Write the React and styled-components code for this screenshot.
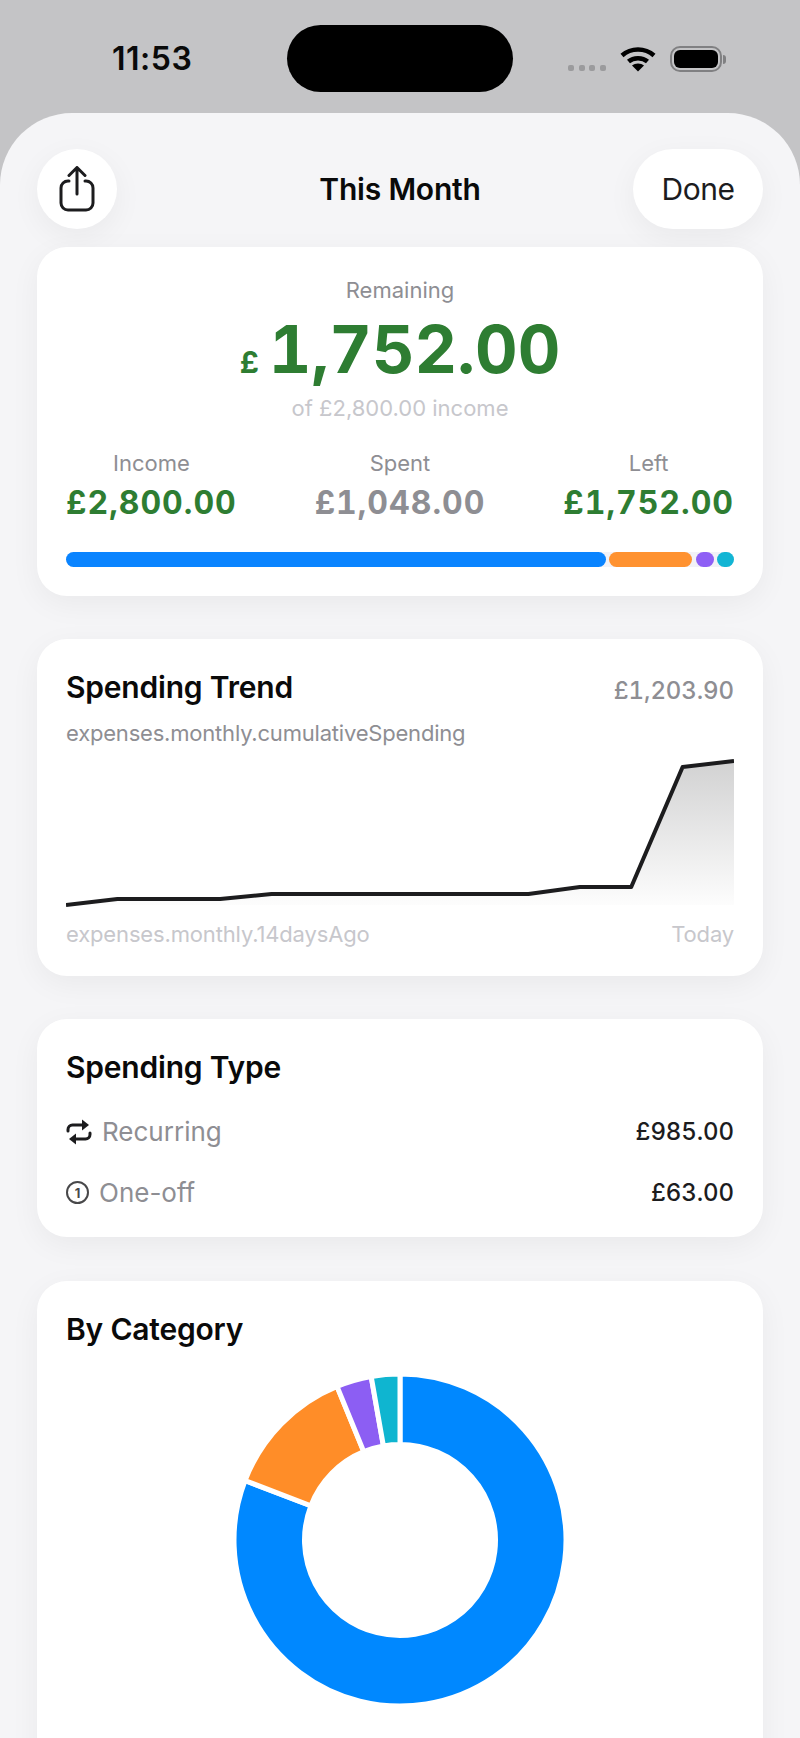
import React from 'react';
import styled, { createGlobalStyle } from 'styled-components';

const Global = createGlobalStyle`
  html, body {
    margin: 0;
    padding: 0;
    background: #c4c4c6;
    font-family: Inter, "Liberation Sans", sans-serif;
    -webkit-font-smoothing: antialiased;
  }
`;

const Page = styled.div`
  width: 800px;
  height: 1738px;
  overflow: hidden;
  background: #c4c4c6;
`;

const StatusBar = styled.div`
  height: 113px;
  display: grid;
  grid-template-columns: 287px 226px 1fr;
  box-sizing: border-box;
  padding-top: 25px;
`;

const Time = styled.div`
  height: 68px;
  padding-left: 112px;
  line-height: 68px;
  font-size: 32px;
  font-weight: 600;
  letter-spacing: 0.5px;
  color: #0a0a0a;
`;

const Island = styled.div`
  height: 67px;
  border-radius: 34px;
  background: #000;
`;

const StatusIcons = styled.div`
  display: flex;
  align-items: flex-start;
  padding: 21px 0 0 55px;
`;

const SignalDots = styled.div`
  display: flex;
  gap: 4.6px;
  margin: 19px 14px 0 0;
`;

const SignalDot = styled.span`
  width: 6px;
  height: 6px;
  border-radius: 2px;
  background: #9b9b9d;
`;

const BatteryBody = styled.div`
  width: 52px;
  height: 26px;
  box-sizing: border-box;
  margin-left: 14px;
  padding: 2px;
  border: 2px solid #808082;
  border-radius: 10px;
`;

const BatteryFill = styled.div`
  height: 100%;
  border-radius: 6px;
  background: #000;
`;

const BatteryNub = styled.span`
  width: 3px;
  height: 9px;
  margin: 8.5px 0 0 1.5px;
  border-radius: 0 3px 3px 0;
  background: #808082;
`;

const Sheet = styled.div`
  display: flex;
  flex-direction: column;
  box-sizing: border-box;
  min-height: 1625px;
  padding: 36px 37px 0;
  border-radius: 72px 72px 0 0;
  background: #f5f5f7;
`;

const Header = styled.header`
  display: grid;
  grid-template-columns: 130px 1fr 130px;
  align-items: center;
  height: 80px;
  margin-bottom: 18px;
`;

const ShareButton = styled.div`
  display: flex;
  align-items: center;
  justify-content: center;
  width: 80px;
  height: 80px;
  border-radius: 50%;
  background: #fff;
  box-shadow: 0 8px 30px rgba(0, 0, 0, 0.05);
`;

const HeaderTitle = styled.h1`
  margin: 0;
  text-align: center;
  font-size: 30px;
  font-weight: 600;
  letter-spacing: -0.2px;
  color: #0a0a0a;
`;

const DoneButton = styled.div`
  display: flex;
  align-items: center;
  justify-content: center;
  height: 80px;
  border-radius: 40px;
  background: #fff;
  font-size: 30px;
  letter-spacing: -0.5px;
  color: #1c1c1e;
  box-shadow: 0 8px 30px rgba(0, 0, 0, 0.05);
`;

const Card = styled.section`
  box-sizing: border-box;
  margin-bottom: ${props => props.$gap || 43}px;
  padding: ${props => props.$top || 30}px 29px ${props => props.$bottom || 28}px;
  border-radius: 30px;
  background: #fff;
  box-shadow: 0 8px 30px rgba(0, 0, 0, 0.05);
`;

const CenterLabel = styled.div`
  text-align: center;
  font-size: 22px;
  line-height: 28px;
  color: ${props => props.$light ? '#c7c7cc' : '#8e8e93'};
  margin-top: ${props => props.$mt || 0}px;
`;

const BigAmount = styled.div`
  display: flex;
  align-items: baseline;
  justify-content: center;
  gap: 10px;
  height: 80px;
  margin-top: 5px;
  line-height: 80px;
  font-size: 66px;
  font-weight: 700;
  font-variant-numeric: tabular-nums;
  color: #2e7d32;
`;

const BigCurrency = styled.span`
  font-size: 30px;
  font-weight: 700;
`;

const Stats = styled.div`
  display: grid;
  grid-template-columns: repeat(3, auto);
  justify-content: space-between;
  margin-top: 27px;
`;

const Stat = styled.div`
  text-align: center;
`;

const StatValue = styled.div`
  margin-top: 6px;
  font-size: 32px;
  line-height: 40px;
  font-weight: 700;
  font-variant-numeric: tabular-nums;
  letter-spacing: 1px;
  color: ${props => props.$muted ? '#8e8e93' : '#2e7d32'};
`;

const BudgetBar = styled.div`
  display: flex;
  gap: 3.5px;
  height: 15px;
  margin-top: 29px;
  border-radius: 8px;
  background: #f2f2f7;
`;

const BudgetSegment = styled.div`
  border-radius: 8px;
  background: ${props => props.$color};
`;

const TitleRow = styled.div`
  display: flex;
  align-items: center;
  justify-content: space-between;
`;

const CardTitle = styled.h2`
  margin: 0;
  font-size: 30px;
  line-height: 36px;
  font-weight: 600;
  letter-spacing: -0.2px;
  color: #0a0a0a;
`;

const TrendTotal = styled.div`
  margin-top: 6px;
  font-size: 24px;
  font-weight: 500;
  font-variant-numeric: tabular-nums;
  letter-spacing: -0.1px;
  color: #8e8e93;
`;

const Subtitle = styled.div`
  margin-top: 14px;
  font-size: 22px;
  line-height: 28px;
  letter-spacing: -0.2px;
  color: #8e8e93;
`;

const Chart = styled.svg`
  display: block;
  margin-top: 12px;
`;

const AxisLabels = styled.div`
  display: flex;
  justify-content: space-between;
  margin-top: 11px;
  font-size: 22px;
  line-height: 28px;
  letter-spacing: -0.15px;
  color: #c7c7cc;
`;

const TypeRow = styled.div`
  display: flex;
  align-items: center;
  justify-content: space-between;
  height: 61px;
  &:first-of-type {
    margin-top: 16px;
  }
`;

const TypeName = styled.div`
  display: flex;
  align-items: center;
  gap: 10px;
  font-size: 26px;
  color: #8e8e93;
`;

const OneOffIcon = styled.span`
  display: flex;
  align-items: center;
  justify-content: center;
  width: 23px;
  height: 23px;
  box-sizing: border-box;
  border: 2.5px solid #48484a;
  border-radius: 50%;
  font-size: 13px;
  font-weight: 700;
  color: #48484a;
`;

const TypeAmount = styled.div`
  font-size: 24px;
  font-weight: 500;
  font-variant-numeric: tabular-nums;
  letter-spacing: -0.1px;
  color: #1c1c1e;
`;

const Donut = styled.svg`
  display: block;
  margin: 25px auto 0;
`;

const trend = [905, 899, 899, 899, 894, 894, 894, 894, 894, 894, 887, 887, 767, 761];

const segments = [
  { color: '#0a84ff', width: 539.5 },
  { color: '#ff9230', width: 83 },
  { color: '#8e5ff5', width: 18 },
  { color: '#12b5d4', width: 17 },
];

const slices = [
  { color: '#0088ff', from: 0, to: 291 },
  { color: '#ff8d28', from: 291, to: 337.7 },
  { color: '#8c5ef3', from: 337.7, to: 350 },
  { color: '#0fb5d0', from: 350, to: 360 },
];

const polar = (r, deg) => {
  const a = (deg * Math.PI) / 180;
  return [168 + r * Math.sin(a), 168 - r * Math.cos(a)];
};

const slicePath = (from, to) => {
  const [x1, y1] = polar(166, from);
  const [x2, y2] = polar(166, to);
  const [x3, y3] = polar(95.5, to);
  const [x4, y4] = polar(95.5, from);
  const large = to - from > 180 ? 1 : 0;
  return `M${x1} ${y1}A166 166 0 ${large} 1 ${x2} ${y2}L${x3} ${y3}A95.5 95.5 0 ${large} 0 ${x4} ${y4}Z`;
};

const ShareIcon = () => (
  <svg width="36" height="46" viewBox="0 0 36 46" fill="none" stroke="#1c1c1e" strokeWidth="3" strokeLinecap="round" strokeLinejoin="round">
    <path d="M10 15H9a7 7 0 0 0-7 7v15a7 7 0 0 0 7 7h18a7 7 0 0 0 7-7V22a7 7 0 0 0-7-7h-1" />
    <path d="M18 28V2M10 9.500l8-8 8 8" />
  </svg>
);

const WifiIcon = () => (
  <svg width="36" height="26" viewBox="0 0 36 26" fill="none" stroke="#000" strokeWidth="4.500">
    <path d="M2 9.500C11 1.500 25 1.500 34 9.500" />
    <path d="M8.500 15.500C13.500 11 22.500 11 27.500 15.500" />
    <path d="M18 25.500L12 19.500C15 16.800 21 16.800 24 19.500Z" fill="#000" stroke="none" />
  </svg>
);

const RepeatIcon = () => (
  <svg width="26" height="30" viewBox="0 0 26 30" fill="none" stroke="#1c1c1e" strokeWidth="3" strokeLinecap="round">
    <path d="M2 14v-1.500a4.500 4.500 0 0 1 4.500-4.500H17" />
    <path d="M24 16v1.500a4.500 4.500 0 0 1-4.500 4.500H9" />
    <path d="M16 2.500L23 8l-7 5.500Z" fill="#1c1c1e" stroke="none" />
    <path d="M10 16.500L3 22l7 5.500Z" fill="#1c1c1e" stroke="none" />
  </svg>
);

const TrendChart = () => {
  const points = trend.map((y, i) => [(i * 668) / 13, y - 759]);
  const line = points.map(p => p.join(',')).join(' ');
  return (
    <Chart width="668" height="150" viewBox="0 0 668 150">
      <defs>
        <linearGradient id="trendFill" x1="0" y1="0" x2="0" y2="1">
          <stop offset="0" stopColor="#1c1c1e" stopOpacity="0.2" />
          <stop offset="1" stopColor="#1c1c1e" stopOpacity="0.01" />
        </linearGradient>
      </defs>
      <polygon points={`0,146 ${line} 668,146`} fill="url(#trendFill)" />
      <polyline points={line} fill="none" stroke="#1c1c1e" strokeWidth="4" strokeLinejoin="round" />
    </Chart>
  );
};

export default function App() {
  return (
    <Page>
      <Global />
      <StatusBar>
        <Time>11:53</Time>
        <Island />
        <StatusIcons>
          <SignalDots>
            <SignalDot /><SignalDot /><SignalDot /><SignalDot />
          </SignalDots>
          <WifiIcon />
          <BatteryBody><BatteryFill /></BatteryBody>
          <BatteryNub />
        </StatusIcons>
      </StatusBar>
      <Sheet>
        <Header>
          <ShareButton><ShareIcon /></ShareButton>
          <HeaderTitle>This Month</HeaderTitle>
          <DoneButton>Done</DoneButton>
        </Header>

        <Card $top={29} $bottom={29}>
          <CenterLabel>Remaining</CenterLabel>
          <BigAmount><BigCurrency>£</BigCurrency>1,752.00</BigAmount>
          <CenterLabel $light $mt={5}>of £2,800.00 income</CenterLabel>
          <Stats>
            <Stat>
              <CenterLabel>Income</CenterLabel>
              <StatValue>£2,800.00</StatValue>
            </Stat>
            <Stat>
              <CenterLabel>Spent</CenterLabel>
              <StatValue $muted>£1,048.00</StatValue>
            </Stat>
            <Stat>
              <CenterLabel>Left</CenterLabel>
              <StatValue>£1,752.00</StatValue>
            </Stat>
          </Stats>
          <BudgetBar>
            {segments.map(s => (
              <BudgetSegment key={s.color} $color={s.color} style={{ width: s.width }} />
            ))}
          </BudgetBar>
        </Card>

        <Card>
          <TitleRow>
            <CardTitle>Spending Trend</CardTitle>
            <TrendTotal>£1,203.90</TrendTotal>
          </TitleRow>
          <Subtitle>expenses.monthly.cumulativeSpending</Subtitle>
          <TrendChart />
          <AxisLabels>
            <span>expenses.monthly.14daysAgo</span>
            <span>Today</span>
          </AxisLabels>
        </Card>

        <Card $bottom={14} $gap={44}>
          <CardTitle>Spending Type</CardTitle>
          <TypeRow>
            <TypeName><RepeatIcon />Recurring</TypeName>
            <TypeAmount>£985.00</TypeAmount>
          </TypeRow>
          <TypeRow>
            <TypeName><OneOffIcon>1</OneOffIcon>One-off</TypeName>
            <TypeAmount>£63.00</TypeAmount>
          </TypeRow>
        </Card>

        <Card $bottom={100}>
          <CardTitle>By Category</CardTitle>
          <Donut width="336" height="336" viewBox="0 0 336 336">
            {slices.map(s => (
              <path key={s.color} d={slicePath(s.from, s.to)} fill={s.color} stroke="#fff" strokeWidth="5" />
            ))}
          </Donut>
        </Card>
      </Sheet>
    </Page>
  );
}
